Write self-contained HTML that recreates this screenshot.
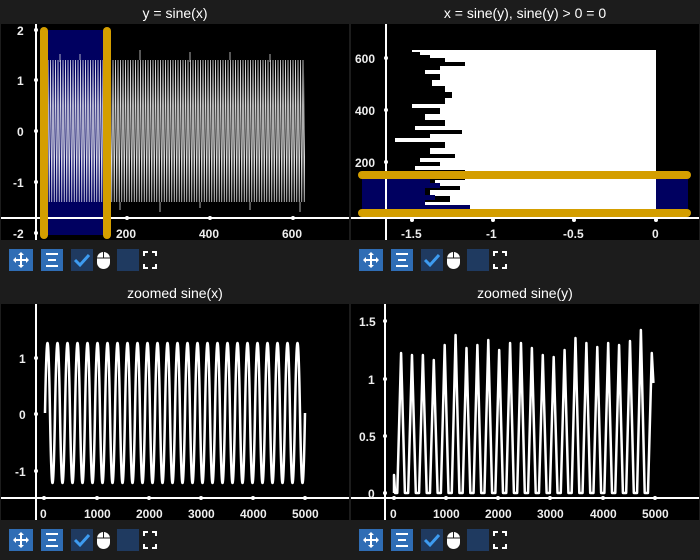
<!DOCTYPE html>
<html><head><meta charset="utf-8"><style>
html,body{margin:0;padding:0;background:#1c1c1c;width:700px;height:560px;overflow:hidden}
svg{display:block}
text{font-family:"Liberation Sans",sans-serif}
.t{fill:#fff;font-size:14px;text-anchor:middle}
.l{fill:#eee;font-size:12px;font-weight:bold}
</style></head><body>
<svg width="700" height="560" viewBox="0 0 700 560">
<defs>
<pattern id="zz" x="48" y="60" width="2.5" height="142" patternUnits="userSpaceOnUse">
<path d="M0,0 L1.25,142 L2.5,0" stroke="#fff" stroke-width="0.8" fill="none"/>
</pattern>
<g id="tb">
<rect x="9" y="9" width="24" height="22" fill="#2f6db5"/>
<path d="M21,12 l-3,3 h2 v4 h-4 v-2 l-3,3 3,3 v-2 h4 v4 h-2 l3,3 3,-3 h-2 v-4 h4 v2 l3,-3 -3,-3 v2 h-4 v-4 h2z" fill="#fff"/>
<rect x="41" y="9" width="22" height="22" fill="#2f6db5"/>
<path d="M46,14h12M48,20h8M46,26h12" stroke="#fff" stroke-width="2"/>
<rect x="71" y="9" width="22" height="22" fill="#1f3a60"/>
<path d="M75,20 l5,5 9,-10" stroke="#3d9bf0" stroke-width="3" fill="none"/>
<rect x="97" y="12" width="13" height="17" rx="6.5" fill="#fff"/>
<path d="M103.5,12v6M97,18h13" stroke="#1c1c1c" stroke-width="1"/>
<rect x="117" y="9" width="22" height="22" fill="#1f3a60"/>
<path d="M144,16v-4h4M152,12h4v4M156,24v4h-4M148,28h-4v-4" stroke="#fff" stroke-width="2" fill="none"/>
</g>
</defs>
<rect x="1" y="24" width="348" height="216" fill="#000"/>
<rect x="351" y="24" width="348" height="216" fill="#000"/>
<rect x="1" y="304" width="348" height="216" fill="#000"/>
<rect x="351" y="304" width="348" height="216" fill="#000"/>
<text class="t" x="175" y="18">y = sine(x)</text>
<text class="t" x="525" y="18">x = sine(y), sine(y) &gt; 0 = 0</text>
<text class="t" x="175" y="298">zoomed sine(x)</text>
<text class="t" x="525" y="298">zoomed sine(y)</text>

<!-- TL -->
<rect x="44" y="30" width="63" height="205" fill="#000060"/>
<rect x="48" y="60" width="257" height="142" fill="url(#zz)" opacity="0.85"/>
<path d="M60,62l0,-8M80,60l0,-6M140,60l0,-10M190,62l0,-10M230,60l0,-8M270,62l0,-8M120,202l0,8M160,202l0,10M200,202l0,6M250,202l0,8M300,202l0,10" stroke="#ddd" stroke-width="0.8"/>
<line x1="36" y1="24" x2="36" y2="240" stroke="#fff" stroke-width="2"/>
<line x1="1" y1="218" x2="349" y2="218" stroke="#fff" stroke-width="2"/>
<g fill="#fff"><circle cx="36" cy="30" r="2"/><circle cx="36" cy="80" r="2"/><circle cx="36" cy="131" r="2"/><circle cx="36" cy="182" r="2"/><circle cx="36" cy="233" r="2"/><circle cx="127" cy="218" r="2"/><circle cx="210" cy="218" r="2"/><circle cx="293" cy="218" r="2"/></g>
<rect x="40" y="27" width="8" height="212" rx="4" fill="#d49e00"/>
<rect x="103" y="27" width="8" height="212" rx="4" fill="#d49e00"/>
<g class="l"><text x="17" y="35">2</text><text x="17" y="85">1</text><text x="17" y="136">0</text><text x="13" y="187">-1</text><text x="13" y="238">-2</text>
<text x="116" y="238">200</text><text x="199" y="238">400</text><text x="282" y="238">600</text></g>

<!-- TR -->
<polygon fill="#fff" points="656,50 412,50 412,52 420,52 420,55 430,55 430,58 445,58 445,62 465,62 465,66 440,66 440,70 425,70 425,74 440,74 440,80 432,80 432,86 445,86 445,92 452,92 452,98 445,98 445,104 412,104 412,108 440,108 440,114 425,114 425,120 445,120 445,126 415,126 415,130 462,130 462,134 430,134 430,138 395,138 395,142 445,142 445,148 430,148 430,154 455,154 455,158 420,158 420,162 440,162 440,166 415,166 415,170 465,170 465,180 435,180 435,186 460,186 460,190 430,190 430,196 450,196 450,202 425,202 425,206 470,206 470,210 656,210"/>
<rect x="362" y="179" width="50" height="30" fill="#000060"/>
<polygon fill="#000060" points="412,179 430,179 430,183 440,183 440,188 425,188 425,195 435,195 435,200 425,200 425,205 470,205 470,209 412,209"/>
<rect x="656" y="179" width="32" height="30" fill="#000060"/>
<line x1="386" y1="24" x2="386" y2="240" stroke="#fff" stroke-width="2"/>
<line x1="351" y1="218" x2="699" y2="218" stroke="#fff" stroke-width="2"/>
<g fill="#fff"><circle cx="386" cy="58" r="2"/><circle cx="386" cy="110" r="2"/><circle cx="386" cy="162" r="2"/><circle cx="412" cy="220" r="2"/><circle cx="493" cy="220" r="2"/><circle cx="574" cy="220" r="2"/><circle cx="656" cy="220" r="2"/></g>
<rect x="358" y="171" width="333" height="8" rx="4" fill="#d49e00"/>
<rect x="358" y="209" width="333" height="8" rx="4" fill="#d49e00"/>
<g class="l"><text x="355" y="63">600</text><text x="355" y="115">400</text><text x="355" y="167">200</text>
<text x="401" y="238">-1.5</text><text x="486" y="238">-1</text><text x="563" y="238">-0.5</text><text x="652" y="238">0</text></g>

<!-- BL -->
<path fill="none" stroke="#fff" stroke-width="2.5" stroke-linejoin="round" d="M45,413 q2.5,-140 5,0 t5,0 t5,0 t5,0 t5,0 t5,0 t5,0 t5,0 t5,0 t5,0 t5,0 t5,0 t5,0 t5,0 t5,0 t5,0 t5,0 t5,0 t5,0 t5,0 t5,0 t5,0 t5,0 t5,0 t5,0 t5,0 t5,0 t5,0 t5,0 t5,0 t5,0 t5,0 t5,0 t5,0 t5,0 t5,0 t5,0 t5,0 t5,0 t5,0 t5,0 t5,0 t5,0 t5,0 t5,0 t5,0 t5,0 t5,0 t5,0 t5,0 t5,0 t5,0"/>
<line x1="36" y1="304" x2="36" y2="520" stroke="#fff" stroke-width="2"/>
<line x1="1" y1="498" x2="349" y2="498" stroke="#fff" stroke-width="2"/>
<g fill="#fff"><circle cx="36" cy="358" r="2"/><circle cx="36" cy="414" r="2"/><circle cx="36" cy="471" r="2"/><circle cx="44" cy="498" r="2"/><circle cx="97" cy="498" r="2"/><circle cx="149" cy="498" r="2"/><circle cx="201" cy="498" r="2"/><circle cx="253" cy="498" r="2"/><circle cx="305" cy="498" r="2"/></g>
<g class="l"><text x="19" y="363">1</text><text x="19" y="419">0</text><text x="15" y="476">-1</text>
<text x="40" y="518">0</text><text x="84" y="518">1000</text><text x="136" y="518">2000</text><text x="188" y="518">3000</text><text x="240" y="518">4000</text><text x="292" y="518">5000</text></g>

<!-- BR -->
<g transform="translate(394,0) scale(1.09,1) translate(-394,0)">
<path fill="none" stroke="#fff" stroke-width="2.5" stroke-linejoin="round" vector-effect="non-scaling-stroke" d="M394,493 l0,-18 l1,18 l2,0 l3.5,-140 l3.5,140 l3,0 l3.5,-138 l3.5,138 l3,0 l3.5,-138 l3.5,138 l3,0 l3.5,-133 l3.5,133 l3,0 l3.5,-148 l3.5,148 l3,0 l3.5,-158 l3.5,158 l3,0 l3.5,-145 l3.5,145 l3,0 l3.5,-148 l3.5,148 l3,0 l3.5,-153 l3.5,153 l3,0 l3.5,-143 l3.5,143 l3,0 l3.5,-150 l3.5,150 l3,0 l3.5,-150 l3.5,150 l3,0 l3.5,-145 l3.5,145 l3,0 l3.5,-138 l3.5,138 l3,0 l3.5,-136 l3.5,136 l3,0 l3.5,-143 l3.5,143 l3,0 l3.5,-155 l3.5,155 l3,0 l3.5,-150 l3.5,150 l3,0 l3.5,-146 l3.5,146 l3,0 l3.5,-150 l3.5,150 l3,0 l3.5,-148 l3.5,148 l3,0 l3.5,-152 l3.5,152 l3,0 l3.5,-163 l3.5,163 l3,0 l3.5,-140 l1.5,30"/>
</g>
<line x1="385" y1="304" x2="385" y2="520" stroke="#fff" stroke-width="2"/>
<line x1="351" y1="498" x2="699" y2="498" stroke="#fff" stroke-width="2"/>
<g fill="#fff"><circle cx="385" cy="321" r="2"/><circle cx="385" cy="379" r="2"/><circle cx="385" cy="436" r="2"/><circle cx="385" cy="493" r="2"/><circle cx="394" cy="498" r="2"/><circle cx="446" cy="498" r="2"/><circle cx="498" cy="498" r="2"/><circle cx="550" cy="498" r="2"/><circle cx="603" cy="498" r="2"/><circle cx="655" cy="498" r="2"/></g>
<g class="l"><text x="359" y="326">1.5</text><text x="368" y="384">1</text><text x="359" y="441">0.5</text><text x="368" y="498">0</text>
<text x="390" y="518">0</text><text x="433" y="518">1000</text><text x="485" y="518">2000</text><text x="537" y="518">3000</text><text x="590" y="518">4000</text><text x="642" y="518">5000</text></g>

<use href="#tb" x="0" y="240"/>
<use href="#tb" x="350" y="240"/>
<use href="#tb" x="0" y="520"/>
<use href="#tb" x="350" y="520"/>
</svg>
</body></html>
